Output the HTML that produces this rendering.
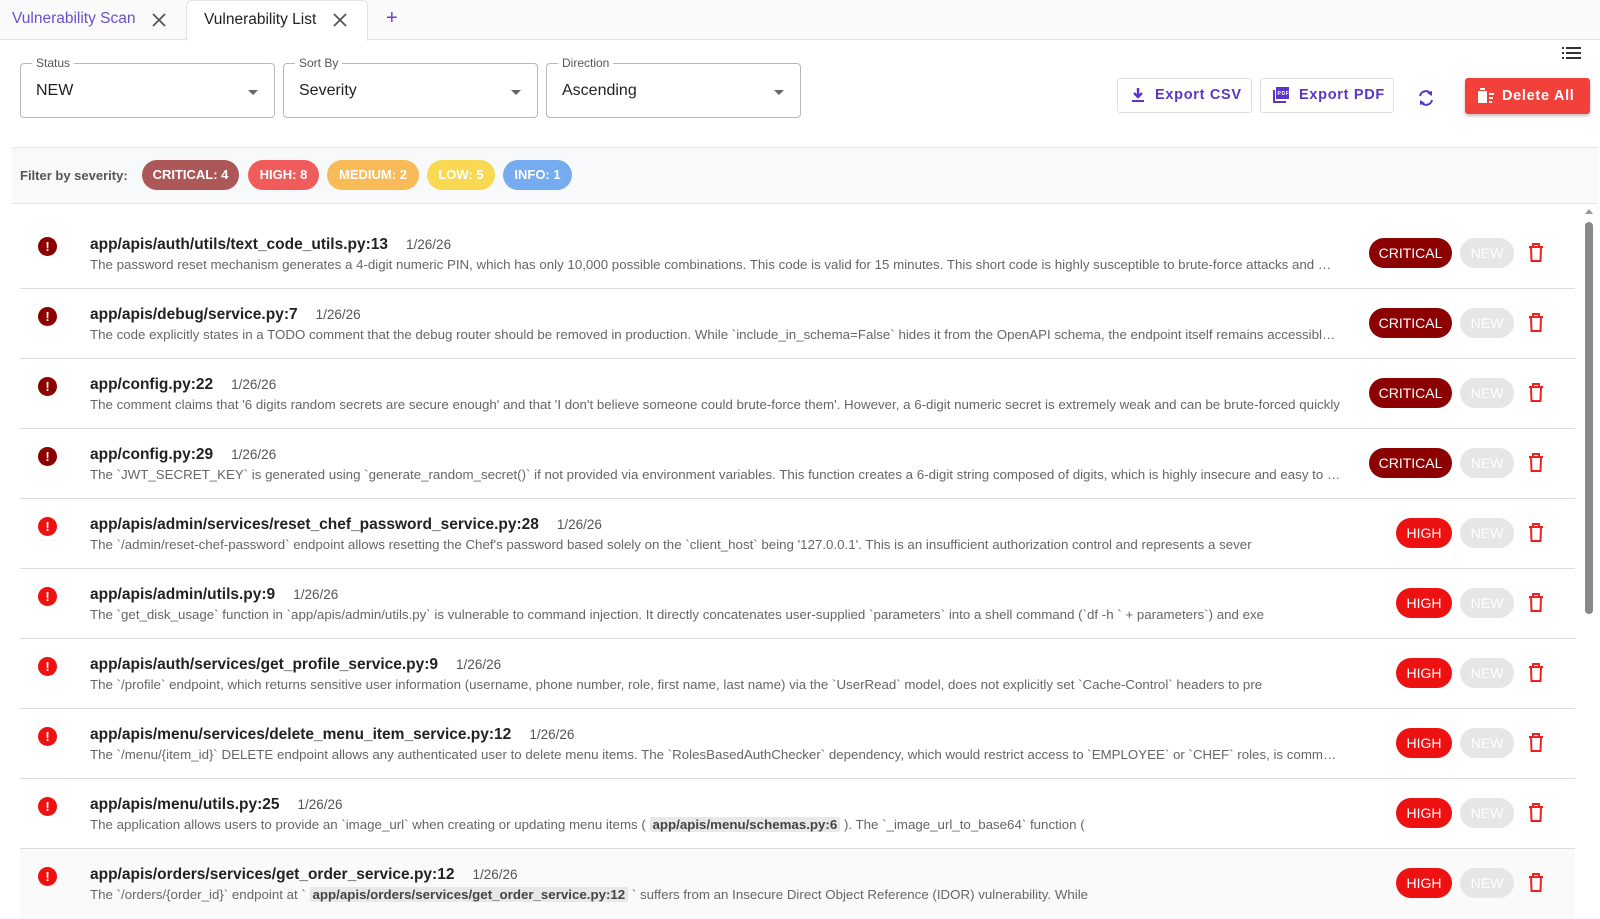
<!DOCTYPE html>
<html><head><style>
*{box-sizing:border-box;margin:0;padding:0}
body{width:1600px;height:908px;overflow:hidden;background:#fff;font-family:"Liberation Sans",sans-serif;color:#222;position:relative}
.tabs{height:40px;border-bottom:1px solid #e3e3e3;background:#fafafa;position:relative}
.tab{position:absolute;top:0;height:40px;font-size:15.5px;line-height:38px}
.t1{left:12px;color:#6a4fc8}
.t2{left:186px;width:182px;background:#fff;border:1px solid #e3e3e3;border-bottom:none;border-radius:6px 6px 0 0;padding-left:17px;height:41px}
.x{position:absolute;top:12px}
.plus{left:386px;color:#6a3ed0;font-size:20px;line-height:36px}
.sel{position:absolute;top:63px;height:55px;border:1px solid #b8b8b8;border-radius:4px}
.sel label{position:absolute;top:-8px;left:11px;background:#fff;padding:0 4px;font-size:12px;color:#555}
.sel span{position:absolute;left:15px;top:18px;font-size:16px;color:#222}
.sel i{position:absolute;right:16px;top:26px;border:5px solid transparent;border-top-color:#666;border-bottom:0}
.btn{position:absolute;top:78px;height:35px;border:1px solid #e0e0e0;border-radius:3px;color:#5a36c8;font-weight:bold;font-size:14.5px;letter-spacing:.7px;line-height:33px}
.del{position:absolute;left:1465px;top:78px;width:125px;height:36px;background:#f2403a;border-radius:3px;color:#fff;font-weight:bold;font-size:14.5px;letter-spacing:.7px;line-height:36px;box-shadow:0 2px 3px rgba(0,0,0,.25)}
.filter{position:absolute;left:12px;top:147px;width:1586px;height:57px;background:#f8f9fa;border-top:1px solid #e6e6e6;border-bottom:1px solid #e6e6e6}
.filter b{position:absolute;left:8px;top:20px;font-size:13px;color:#555}
.chip{position:absolute;top:12px;height:30px;border-radius:15px;color:#fff;font-weight:bold;font-size:13px;line-height:30px;text-align:center;opacity:.95}
.row{position:absolute;left:20px;width:1555px;height:70px;border-bottom:1px solid #ddd}
.ic{position:absolute;left:18px;top:18px;width:19px;height:19px;border-radius:50%;color:#fff;font-weight:bold;font-size:13px;text-align:center;line-height:19px}
.ti{position:absolute;left:70px;top:17px;font-size:15.5px;font-weight:bold;color:#222;white-space:nowrap}
.ti small{font-weight:normal;font-size:13.5px;color:#555;margin-left:18px}
.de{position:absolute;left:70px;top:38px;width:1252px;font-size:13.3px;color:#666;white-space:nowrap;overflow:hidden;text-overflow:ellipsis}
.code{background:#e8e8e8;color:#444;font-weight:bold;border-radius:3px;padding:1px 3px}
.sev{position:absolute;top:19px;height:30px;border-radius:15px;color:#fff;font-size:14px;line-height:30px;text-align:center}
.cr{left:1349px;width:83px;background:#8b0000}
.hi{left:1376px;width:56px;background:#ee1111}
.nw{position:absolute;left:1440px;top:19px;width:54px;height:30px;border-radius:15px;background:#e6e6e6;color:#fff;font-size:14px;line-height:30px;text-align:center}
.tr{position:absolute;left:1508px;top:24px}
</style></head><body>
<div class="tabs">
<div class="tab t1">Vulnerability Scan</div>
<svg class="x" style="left:151px" width="16" height="16"><path d="M2 2L14 14M14 2L2 14" stroke="#555" stroke-width="1.8"/></svg>
<div class="tab t2">Vulnerability List</div>
<svg class="x" style="left:332px" width="16" height="16"><path d="M2 2L14 14M14 2L2 14" stroke="#555" stroke-width="1.8"/></svg>
<div class="tab plus">+</div>
</div>
<svg style="position:absolute;left:1562px;top:46px" width="19" height="14"><g fill="#333"><rect x="0" y="1" width="2" height="2"/><rect x="4" y="1" width="15" height="2"/><rect x="0" y="6" width="2" height="2"/><rect x="4" y="6" width="15" height="2"/><rect x="0" y="11" width="2" height="2"/><rect x="4" y="11" width="15" height="2"/></g></svg>
<div class="sel" style="left:20px;width:255px"><label>Status</label><span>NEW</span><i></i></div>
<div class="sel" style="left:283px;width:255px"><label>Sort By</label><span>Severity</span><i></i></div>
<div class="sel" style="left:546px;width:255px"><label>Direction</label><span>Ascending</span><i></i></div>
<div class="btn" style="left:1117px;width:135px"><svg style="position:absolute;left:14px;top:9px" width="12" height="15"><path d="M6 0V9M2 5L6 9L10 5" stroke="#5a36c8" stroke-width="2.4" fill="none"/><rect x="0" y="12" width="12" height="2" fill="#5a36c8"/></svg><span style="position:absolute;left:37px">Export CSV</span></div>
<div class="btn" style="left:1260px;width:134px"><svg style="position:absolute;left:12px;top:8px" width="16" height="16"><rect x="3" y="0" width="13" height="12" fill="#5a36c8"/><path d="M1 3V15H13" stroke="#5a36c8" stroke-width="2" fill="none"/><text x="4.5" y="8" font-size="5" fill="#fff" font-family="Liberation Sans">PDF</text></svg><span style="position:absolute;left:38px">Export PDF</span></div>
<svg style="position:absolute;left:1416px;top:88px" width="20" height="20" viewBox="0 0 20 20"><path d="M15 6A6 6 0 0 0 4 8M5 14A6 6 0 0 0 16 12" stroke="#5a36c8" stroke-width="2" fill="none"/><path d="M11 5L16 3L16 8Z M9 15L4 17L4 12Z" fill="#5a36c8"/></svg>
<div class="del"><svg style="position:absolute;left:13px;top:10px" width="16" height="15"><rect x="0" y="3" width="9" height="12" fill="#fff"/><rect x="2" y="0" width="5" height="2" fill="#fff"/><rect x="11" y="5" width="5" height="2" fill="#fff"/><rect x="11" y="9" width="4" height="2" fill="#fff"/><rect x="11" y="13" width="3" height="2" fill="#fff"/></svg><span style="position:absolute;left:37px">Delete All</span></div>
<div class="filter"><b>Filter by severity:</b>
<div class="chip" style="left:130px;width:97px;background:#a85050">CRITICAL: 4</div>
<div class="chip" style="left:236px;width:71px;background:#f05454">HIGH: 8</div>
<div class="chip" style="left:315px;width:92px;background:#f8b850">MEDIUM: 2</div>
<div class="chip" style="left:415px;width:68px;background:#f8d848">LOW: 5</div>
<div class="chip" style="left:491px;width:69px;background:#6fa8f0">INFO: 1</div>
</div>
<div style="position:absolute;left:1585px;top:209px;border:4px solid transparent;border-bottom:5px solid #999;border-top:0"></div>
<div style="position:absolute;left:1585px;top:222px;width:8px;height:392px;background:#888;border-radius:4px"></div>

<div class="row" style="top:219px"><div class="ic" style="background:#8b0000">!</div><div class="ti">app/apis/auth/utils/text_code_utils.py:13<small>1/26/26</small></div><div class="de">The password reset mechanism generates a 4-digit numeric PIN, which has only 10,000 possible combinations. This code is valid for 15 minutes. This short code is highly susceptible to brute-force attacks and more text here</div><div class="sev cr">CRITICAL</div><div class="nw">NEW</div><svg class="tr" width="16" height="19"><path d="M1 4H15M5 4V1H11V4M3 4L3.5 18H12.5L13 4" stroke="#e22" stroke-width="2" fill="none"/></svg></div>
<div class="row" style="top:289px"><div class="ic" style="background:#8b0000">!</div><div class="ti">app/apis/debug/service.py:7<small>1/26/26</small></div><div class="de">The code explicitly states in a TODO comment that the debug router should be removed in production. While `include_in_schema=False` hides it from the OpenAPI schema, the endpoint itself remains accessible to anyone</div><div class="sev cr">CRITICAL</div><div class="nw">NEW</div><svg class="tr" width="16" height="19"><path d="M1 4H15M5 4V1H11V4M3 4L3.5 18H12.5L13 4" stroke="#e22" stroke-width="2" fill="none"/></svg></div>
<div class="row" style="top:359px"><div class="ic" style="background:#8b0000">!</div><div class="ti">app/config.py:22<small>1/26/26</small></div><div class="de">The comment claims that '6 digits random secrets are secure enough' and that 'I don't believe someone could brute-force them'. However, a 6-digit numeric secret is extremely weak and can be brute-forced quickly</div><div class="sev cr">CRITICAL</div><div class="nw">NEW</div><svg class="tr" width="16" height="19"><path d="M1 4H15M5 4V1H11V4M3 4L3.5 18H12.5L13 4" stroke="#e22" stroke-width="2" fill="none"/></svg></div>
<div class="row" style="top:429px"><div class="ic" style="background:#8b0000">!</div><div class="ti">app/config.py:29<small>1/26/26</small></div><div class="de">The `JWT_SECRET_KEY` is generated using `generate_random_secret()` if not provided via environment variables. This function creates a 6-digit string composed of digits, which is highly insecure and easy to guess</div><div class="sev cr">CRITICAL</div><div class="nw">NEW</div><svg class="tr" width="16" height="19"><path d="M1 4H15M5 4V1H11V4M3 4L3.5 18H12.5L13 4" stroke="#e22" stroke-width="2" fill="none"/></svg></div>
<div class="row" style="top:499px"><div class="ic" style="background:#ee1111">!</div><div class="ti">app/apis/admin/services/reset_chef_password_service.py:28<small>1/26/26</small></div><div class="de">The `/admin/reset-chef-password` endpoint allows resetting the Chef's password based solely on the `client_host` being '127.0.0.1'. This is an insufficient authorization control and represents a sever</div><div class="sev hi">HIGH</div><div class="nw">NEW</div><svg class="tr" width="16" height="19"><path d="M1 4H15M5 4V1H11V4M3 4L3.5 18H12.5L13 4" stroke="#e22" stroke-width="2" fill="none"/></svg></div>
<div class="row" style="top:569px"><div class="ic" style="background:#ee1111">!</div><div class="ti">app/apis/admin/utils.py:9<small>1/26/26</small></div><div class="de">The `get_disk_usage` function in `app/apis/admin/utils.py` is vulnerable to command injection. It directly concatenates user-supplied `parameters` into a shell command (`df -h ` + parameters`) and exe</div><div class="sev hi">HIGH</div><div class="nw">NEW</div><svg class="tr" width="16" height="19"><path d="M1 4H15M5 4V1H11V4M3 4L3.5 18H12.5L13 4" stroke="#e22" stroke-width="2" fill="none"/></svg></div>
<div class="row" style="top:639px"><div class="ic" style="background:#ee1111">!</div><div class="ti">app/apis/auth/services/get_profile_service.py:9<small>1/26/26</small></div><div class="de">The `/profile` endpoint, which returns sensitive user information (username, phone number, role, first name, last name) via the `UserRead` model, does not explicitly set `Cache-Control` headers to pre</div><div class="sev hi">HIGH</div><div class="nw">NEW</div><svg class="tr" width="16" height="19"><path d="M1 4H15M5 4V1H11V4M3 4L3.5 18H12.5L13 4" stroke="#e22" stroke-width="2" fill="none"/></svg></div>
<div class="row" style="top:709px"><div class="ic" style="background:#ee1111">!</div><div class="ti">app/apis/menu/services/delete_menu_item_service.py:12<small>1/26/26</small></div><div class="de">The `/menu/{item_id}` DELETE endpoint allows any authenticated user to delete menu items. The `RolesBasedAuthChecker` dependency, which would restrict access to `EMPLOYEE` or `CHEF` roles, is commented out</div><div class="sev hi">HIGH</div><div class="nw">NEW</div><svg class="tr" width="16" height="19"><path d="M1 4H15M5 4V1H11V4M3 4L3.5 18H12.5L13 4" stroke="#e22" stroke-width="2" fill="none"/></svg></div>
<div class="row" style="top:779px"><div class="ic" style="background:#ee1111">!</div><div class="ti">app/apis/menu/utils.py:25<small>1/26/26</small></div><div class="de">The application allows users to provide an `image_url` when creating or updating menu items ( <span class="code">app/apis/menu/schemas.py:6</span> ). The `_image_url_to_base64` function (</div><div class="sev hi">HIGH</div><div class="nw">NEW</div><svg class="tr" width="16" height="19"><path d="M1 4H15M5 4V1H11V4M3 4L3.5 18H12.5L13 4" stroke="#e22" stroke-width="2" fill="none"/></svg></div>
<div class="row" style="top:849px;background:#fafafa;border-bottom:none"><div class="ic" style="background:#ee1111">!</div><div class="ti">app/apis/orders/services/get_order_service.py:12<small>1/26/26</small></div><div class="de">The `/orders/{order_id}` endpoint at ` <span class="code">app/apis/orders/services/get_order_service.py:12</span> ` suffers from an Insecure Direct Object Reference (IDOR) vulnerability. While</div><div class="sev hi">HIGH</div><div class="nw">NEW</div><svg class="tr" width="16" height="19"><path d="M1 4H15M5 4V1H11V4M3 4L3.5 18H12.5L13 4" stroke="#e22" stroke-width="2" fill="none"/></svg></div>
</body></html>
